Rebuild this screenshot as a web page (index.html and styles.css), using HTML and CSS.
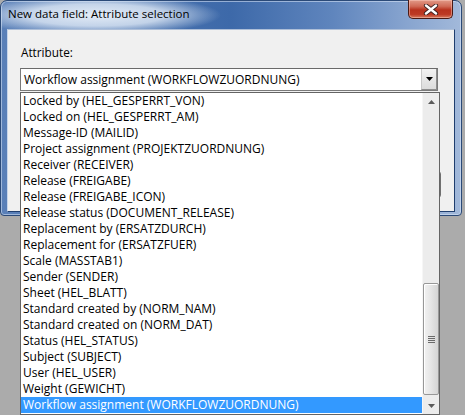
FILE: index.html
```html
<!DOCTYPE html>
<html>
<head>
<meta charset="utf-8">
<link rel="stylesheet" href="styles.css">
</head>
<body>
<div class="screen">
  <div class="window">
    <div class="titlebar">
      <div class="title">New data field: Attribute selection</div>
      <div class="close-btn">
        <svg width="16" height="11" viewBox="0 0 16 11">
          <path d="M3 1.5 L13 9.5 M13 1.5 L3 9.5" stroke="#3a2020" stroke-width="4.2" stroke-linecap="round"/>
          <path d="M3 1.5 L13 9.5 M13 1.5 L3 9.5" stroke="#ffffff" stroke-width="2.4" stroke-linecap="round"/>
        </svg>
      </div>
    </div>
    <div class="client">
      <div class="label">Attribute:</div>
      <div class="combo">
        <div class="combo-text">Workflow assignment (WORKFLOWZUORDNUNG)</div>
        <div class="combo-btn">
          <svg width="7" height="4" viewBox="0 0 7 4"><path d="M0 0 H7 L3.5 4 Z" fill="#000"/></svg>
        </div>
      </div>
      <div class="buttons">
        <div class="btn"></div>
      </div>
    </div>
  </div>

  <div class="dropdown">
    <ul class="items">
      <li>Locked by (HEL_GESPERRT_VON)</li>
      <li>Locked on (HEL_GESPERRT_AM)</li>
      <li>Message-ID (MAILID)</li>
      <li>Project assignment (PROJEKTZUORDNUNG)</li>
      <li>Receiver (RECEIVER)</li>
      <li>Release (FREIGABE)</li>
      <li>Release (FREIGABE_ICON)</li>
      <li>Release status (DOCUMENT_RELEASE)</li>
      <li>Replacement by (ERSATZDURCH)</li>
      <li>Replacement for (ERSATZFUER)</li>
      <li>Scale (MASSTAB1)</li>
      <li>Sender (SENDER)</li>
      <li>Sheet (HEL_BLATT)</li>
      <li>Standard created by (NORM_NAM)</li>
      <li>Standard created on (NORM_DAT)</li>
      <li>Status (HEL_STATUS)</li>
      <li>Subject (SUBJECT)</li>
      <li>User (HEL_USER)</li>
      <li>Weight (GEWICHT)</li>
      <li class="selected">Workflow assignment (WORKFLOWZUORDNUNG)</li>
    </ul>
    <div class="scrollbar">
      <div class="arrow">
        <svg width="7" height="4" viewBox="0 0 7 4"><path d="M0 4 H7 L3.5 0 Z" fill="#5a5a5a"/></svg>
      </div>
      <div class="track">
        <div class="thumb">
          <div class="grip"><i></i><i></i><i></i><i></i></div>
        </div>
      </div>
      <div class="arrow">
        <svg width="7" height="4" viewBox="0 0 7 4"><path d="M0 0 H7 L3.5 4 Z" fill="#5a5a5a"/></svg>
      </div>
    </div>
  </div>
</div>
</body>
</html>
```

FILE: styles.css
```css
* { box-sizing: border-box; }
html, body { margin: 0; padding: 0; }
body {
  background: #ababab;
  font-family: "Open Sans", "Noto Sans", sans-serif;
  font-size: 12px;
  color: #000;
}
.screen {
  position: relative;
  width: 465px;
  height: 415px;
  overflow: hidden;
  background: #ababab;
}
.window {
  width: 462px;
  height: 216px;
  border: 1px solid #2b4a78;
  border-radius: 7px 7px 4px 4px;
  background:
    linear-gradient(to right, #5a80b8 0%, #3d69a9 50%, #5f85bd 72%, #87a4cf 88%, #a2b9da 100%);
  display: flex;
  flex-direction: column;
  box-shadow: inset 0 0 0 1px rgba(220, 232, 248, 0.55);
}
.titlebar {
  height: 28px;
  display: flex;
  align-items: flex-start;
  padding-left: 7px;
  background: radial-gradient(ellipse 125px 20px at 95px 14px, rgba(235, 242, 250, 0.95) 0%, rgba(225, 235, 247, 0.8) 55%, rgba(210, 225, 243, 0) 100%);
}
.title {
  margin-top: 5px;
  height: 16px;
  font-size: 11.5px;
  line-height: 16px;
  color: #000;
  white-space: nowrap;
}
.close-btn {
  margin-left: auto;
  margin-right: 8px;
  margin-top: -1px;
  width: 45px;
  height: 19px;
  border: 1px solid #4a1a14;
  border-top: none;
  border-radius: 0 0 5px 5px;
  background: linear-gradient(to bottom, #e29a88 0%, #d06a56 35%, #b8321e 55%, #bd3a24 80%, #d67a5e 100%);
  display: flex;
  align-items: center;
  justify-content: center;
  box-shadow: inset 0 0 0 1px rgba(255, 210, 200, 0.45);
}
.close-btn svg { display: block; margin-top: 1px; }
.client {
  margin: 0 6px 0 6px;
  height: 183px;
  background: #f0f0f0;
  border: 1px solid #1f3e6e;
  border-left-color: #c7d5ea;
  border-top-color: #aebfd8;
  padding: 15px 0 0 12px;
  display: flex;
  flex-direction: column;
}
.label {
  height: 15px;
  line-height: 15px;
  padding-left: 1px;
  font-size: 11.75px;
}
.combo {
  margin-top: 8px;
  width: 418px;
  height: 23px;
  background: #fff;
  border: 1px solid #7a7a7a;
  border-top-color: #6a6a6a;
  display: flex;
  align-items: center;
}
.combo-text {
  height: 16px;
  line-height: 16px;
  padding-left: 3px;
  white-space: nowrap;
  flex: 1;
}
.combo-btn {
  width: 16px;
  height: 21px;
  background: linear-gradient(to bottom, #f2f2f2, #dcdcdc);
  border-left: 1px solid #c8c8c8;
  border-right: 1px solid #8e8e8e;
  border-bottom: 1px solid #8e8e8e;
  display: flex;
  align-items: center;
  justify-content: center;
}
.combo-btn svg { display: block; }
.buttons {
  margin-top: auto;
  margin-bottom: 13px;
  display: flex;
  justify-content: flex-end;
  padding-right: 13px;
}
.btn {
  width: 75px;
  height: 27px;
  border: 1px solid #707070;
  border-radius: 3px;
  background: linear-gradient(to bottom, #f2f2f2, #dddddd);
}

/* open dropdown popup, drawn over the dialog */
.dropdown {
  position: absolute;
  left: 20px;
  top: 92px;
  width: 420px;
  height: 323px;
  border: 1px solid #646464;
  background: #fff;
  display: flex;
}
.items {
  list-style: none;
  margin: 0;
  padding: 0;
  flex: 1;
}
.items li {
  height: 16px;
  line-height: 16px;
  padding-left: 2px;
  white-space: nowrap;
  color: #000;
}
.items li.selected {
  background: #3399ff;
  color: #fff;
}
.scrollbar {
  width: 17px;
  background: #ececec;
  border-left: 1px solid #f6f6f6;
  display: flex;
  flex-direction: column;
}
.arrow {
  height: 17px;
  display: flex;
  align-items: center;
  justify-content: center;
}
.arrow svg { display: block; }
.track {
  flex: 1;
  display: flex;
  flex-direction: column;
  justify-content: flex-end;
  padding-bottom: 2px;
}
.thumb {
  height: 112px;
  border: 1px solid #979797;
  border-radius: 2px;
  background: linear-gradient(to right, #f2f2f2 0%, #e6e6e6 45%, #d4d4d4 100%);
  box-shadow: inset 1px 1px 0 #fff;
  display: flex;
  align-items: center;
  justify-content: center;
}
.grip {
  display: flex;
  flex-direction: column;
  gap: 1px;
}
.grip i {
  display: block;
  width: 7px;
  height: 1px;
  background: #6a6a6a;
}
```
